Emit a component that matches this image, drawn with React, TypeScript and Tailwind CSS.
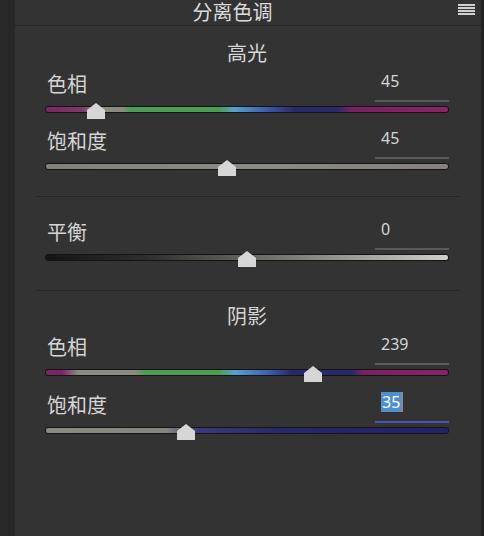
const HI_HUE =
  "bg-[linear-gradient(to_right,#7c2466_0%,#7c3a6a_9%,#8c8c84_13%,#8a8a80_19%,#4c9c54_21%,#4c9c54_43%,#58a0d0_47%,#3a5aa8_55%,#262a6a_62%,#262a6a_72%,#7a2060_76%,#8a2468_100%)]";
const SH_HUE =
  "bg-[linear-gradient(to_right,#7c2466_0%,#7c2466_4%,#8a8a80_8%,#8a8a80_22%,#4c9c54_25%,#4c9c54_43%,#58a0d0_47%,#3a5aa8_56%,#262a6a_61%,#262a6a_76%,#7a2060_79%,#8a2468_100%)]";
const HI_SAT = "bg-[linear-gradient(to_right,#82827c_0%,#8a8a84_50%,#86807e_100%)]";
const BALANCE = "bg-[linear-gradient(to_right,#141414_0%,#2e2e2c_25%,#7a7a74_60%,#cfcfcb_100%)]";
const SH_SAT =
  "bg-[linear-gradient(to_right,#8a8a82_0%,#858580_30%,#3a3a78_38%,#25286a_60%,#222268_100%)]";

type SliderProps = {
  label: string;
  value: string;
  pct: number;
  grad: string;
  focused?: boolean;
  className?: string;
};

const Slider = ({ label, value, pct, grad, focused, className }: SliderProps) => {
  return (
    <div className={className}>
      <div className="flex h-[30px] items-start justify-between">
        <span className="pl-[2px] text-[20px] leading-[24px]">{label}</span>
        <div
          className={`-mt-[2px] h-[31px] w-[74px] border-b-2 pl-[6px] text-[16px] leading-[20px] ${
            focused ? "border-[#4656b8]" : "border-[#5a5a5a]"
          }`}
        >
          {focused ? (
            <span className="inline-block border-r-2 border-[#8a8a8a] bg-[#4d8fd1] px-[1px] text-white">{value}</span>
          ) : (
            value
          )}
        </div>
      </div>
      <div className="relative h-[14px]">
        <div className={`absolute left-0 right-0 top-[3px] h-[7px] rounded-[3px] border border-[#141414] ${grad}`} />
        <svg className="absolute top-0 -ml-[9px]" style={{ left: `${pct}%` }} width="18" height="16" viewBox="0 0 18 16">
          <polygon points="9,0 18,7 18,16 0,16 0,7" fill="#d6d6d6" />
        </svg>
      </div>
    </div>
  );
};

export default function App() {
  return (
    <div
      className="flex h-[536px] w-[484px] bg-[#292929] text-[#d6d6d6]"
      style={{ fontFamily: '"Noto Sans", "Noto Sans CJK SC", sans-serif' }}
    >
      <div className="w-[15px] bg-[#282828]" />
      <div className="flex flex-1 flex-col bg-[#333333]">
        <div className="relative flex h-[26px] items-center justify-center border-b border-dotted border-[#1c1c1c] pr-[31px]">
          <span className="text-[20px] leading-[24px] text-[#dcdcdc]">分离色调</span>
          <div className="absolute right-[6px] top-[4px] flex w-[17px] flex-col gap-[1px]">
            <div className="h-[2px] bg-[#d0d0d0]" />
            <div className="h-[2px] bg-[#d0d0d0]" />
            <div className="h-[2px] bg-[#d0d0d0]" />
            <div className="h-[2px] bg-[#d0d0d0]" />
          </div>
        </div>

        <div className="pl-[30px] pr-[32px]">
          <div className="mt-[16px] text-center text-[20px] leading-[24px]">高光</div>
          <Slider className="mt-[7px]" label="色相" value="45" pct={12.5} grad={HI_HUE} />
          <Slider className="mt-[13px]" label="饱和度" value="45" pct={45} grad={HI_SAT} />
        </div>

        <div className="mx-[21px] mt-[22px] border-t border-[#262626]" />

        <div className="pl-[30px] pr-[32px]">
          <Slider className="mt-[24px]" label="平衡" value="0" pct={50} grad={BALANCE} />
        </div>

        <div className="mx-[21px] mt-[25px] border-t border-[#262626]" />

        <div className="pl-[30px] pr-[32px]">
          <div className="mt-[14px] text-center text-[20px] leading-[24px]">阴影</div>
          <Slider className="mt-[7px]" label="色相" value="239" pct={66.4} grad={SH_HUE} />
          <Slider className="mt-[14px]" label="饱和度" value="35" pct={35} grad={SH_SAT} focused />
        </div>
      </div>
      <div className="w-[3px] bg-[#222222]" />
    </div>
  );
}
